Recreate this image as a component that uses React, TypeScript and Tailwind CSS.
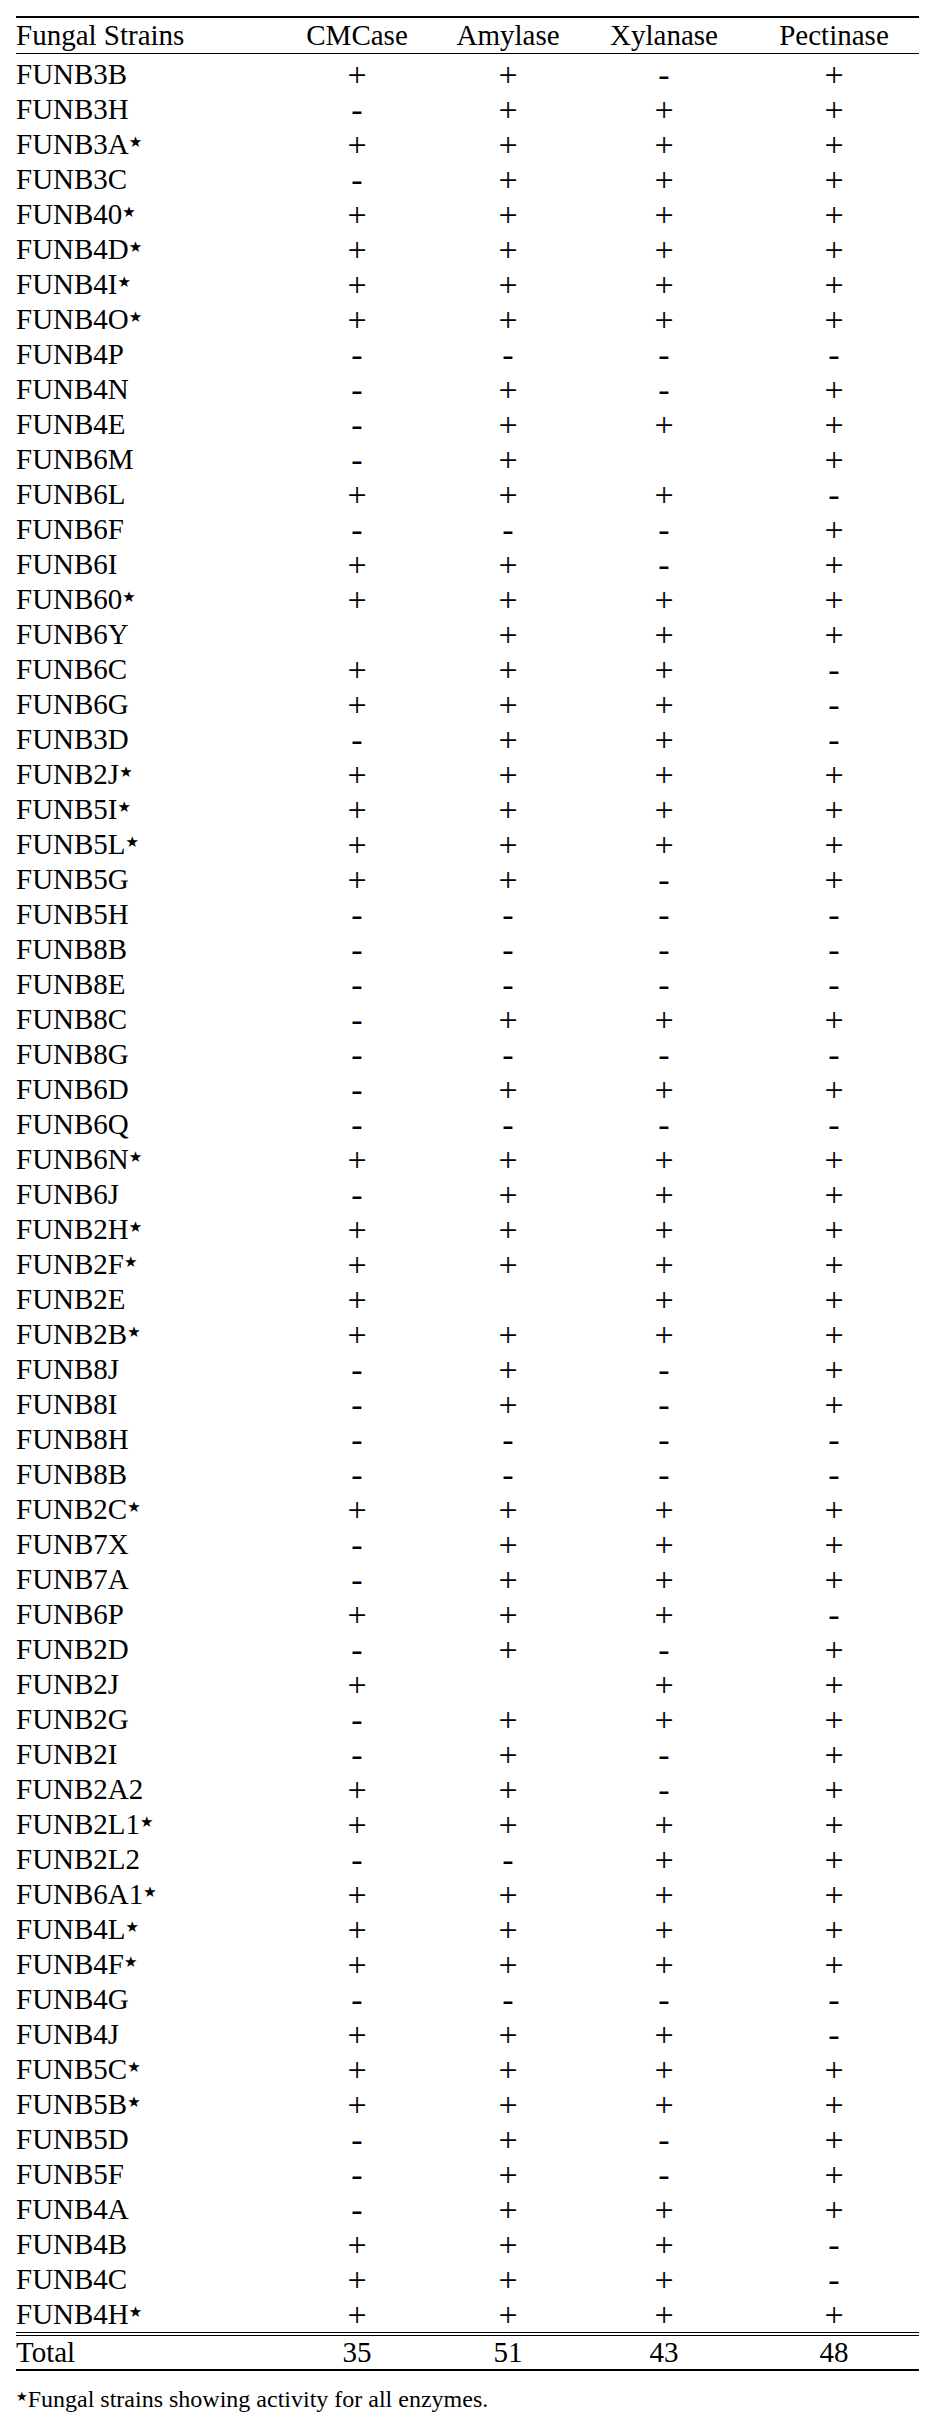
import React from "react";

type Row = [string, boolean, string, string, string, string];

const rows: Row[] = [
  ["FUNB3B", false, "+", "+", "-", "+"],
  ["FUNB3H", false, "-", "+", "+", "+"],
  ["FUNB3A", true, "+", "+", "+", "+"],
  ["FUNB3C", false, "-", "+", "+", "+"],
  ["FUNB40", true, "+", "+", "+", "+"],
  ["FUNB4D", true, "+", "+", "+", "+"],
  ["FUNB4I", true, "+", "+", "+", "+"],
  ["FUNB4O", true, "+", "+", "+", "+"],
  ["FUNB4P", false, "-", "-", "-", "-"],
  ["FUNB4N", false, "-", "+", "-", "+"],
  ["FUNB4E", false, "-", "+", "+", "+"],
  ["FUNB6M", false, "-", "+", "", "+"],
  ["FUNB6L", false, "+", "+", "+", "-"],
  ["FUNB6F", false, "-", "-", "-", "+"],
  ["FUNB6I", false, "+", "+", "-", "+"],
  ["FUNB60", true, "+", "+", "+", "+"],
  ["FUNB6Y", false, "", "+", "+", "+"],
  ["FUNB6C", false, "+", "+", "+", "-"],
  ["FUNB6G", false, "+", "+", "+", "-"],
  ["FUNB3D", false, "-", "+", "+", "-"],
  ["FUNB2J", true, "+", "+", "+", "+"],
  ["FUNB5I", true, "+", "+", "+", "+"],
  ["FUNB5L", true, "+", "+", "+", "+"],
  ["FUNB5G", false, "+", "+", "-", "+"],
  ["FUNB5H", false, "-", "-", "-", "-"],
  ["FUNB8B", false, "-", "-", "-", "-"],
  ["FUNB8E", false, "-", "-", "-", "-"],
  ["FUNB8C", false, "-", "+", "+", "+"],
  ["FUNB8G", false, "-", "-", "-", "-"],
  ["FUNB6D", false, "-", "+", "+", "+"],
  ["FUNB6Q", false, "-", "-", "-", "-"],
  ["FUNB6N", true, "+", "+", "+", "+"],
  ["FUNB6J", false, "-", "+", "+", "+"],
  ["FUNB2H", true, "+", "+", "+", "+"],
  ["FUNB2F", true, "+", "+", "+", "+"],
  ["FUNB2E", false, "+", "", "+", "+"],
  ["FUNB2B", true, "+", "+", "+", "+"],
  ["FUNB8J", false, "-", "+", "-", "+"],
  ["FUNB8I", false, "-", "+", "-", "+"],
  ["FUNB8H", false, "-", "-", "-", "-"],
  ["FUNB8B", false, "-", "-", "-", "-"],
  ["FUNB2C", true, "+", "+", "+", "+"],
  ["FUNB7X", false, "-", "+", "+", "+"],
  ["FUNB7A", false, "-", "+", "+", "+"],
  ["FUNB6P", false, "+", "+", "+", "-"],
  ["FUNB2D", false, "-", "+", "-", "+"],
  ["FUNB2J", false, "+", "", "+", "+"],
  ["FUNB2G", false, "-", "+", "+", "+"],
  ["FUNB2I", false, "-", "+", "-", "+"],
  ["FUNB2A2", false, "+", "+", "-", "+"],
  ["FUNB2L1", true, "+", "+", "+", "+"],
  ["FUNB2L2", false, "-", "-", "+", "+"],
  ["FUNB6A1", true, "+", "+", "+", "+"],
  ["FUNB4L", true, "+", "+", "+", "+"],
  ["FUNB4F", true, "+", "+", "+", "+"],
  ["FUNB4G", false, "-", "-", "-", "-"],
  ["FUNB4J", false, "+", "+", "+", "-"],
  ["FUNB5C", true, "+", "+", "+", "+"],
  ["FUNB5B", true, "+", "+", "+", "+"],
  ["FUNB5D", false, "-", "+", "-", "+"],
  ["FUNB5F", false, "-", "+", "-", "+"],
  ["FUNB4A", false, "-", "+", "+", "+"],
  ["FUNB4B", false, "+", "+", "+", "-"],
  ["FUNB4C", false, "+", "+", "+", "-"],
  ["FUNB4H", true, "+", "+", "+", "+"],
];

const grid = "grid grid-cols-[263px_156px_146px_166px_174px] items-center";

function Star() {
  return <span className="text-[15px] align-[7px] font-['DejaVu_Sans',sans-serif]">★</span>;
}

function Sign({ v }: { v: string }) {
  return <div className="text-center text-[34px] leading-none">{v}</div>;
}

export default function App() {
  return (
    <div className="w-[934px] h-[2424px] bg-white text-black font-['Liberation_Serif',serif] pt-[16px] pl-[16px]">
      <div className="w-[903px]">
        <div className="border-t-2 border-black" />
        <div className={`${grid} h-[35px] text-[29px] leading-none`}>
          <div>Fungal Strains</div>
          <div className="text-center">CMCase</div>
          <div className="text-center">Amylase</div>
          <div className="text-center">Xylanase</div>
          <div className="text-center">Pectinase</div>
        </div>
        <div className="border-t border-black" />
        <div className="pt-[3px]">
          {rows.map((r, i) => (
            <div key={i} className={`${grid} h-[35px] text-[29px] leading-none`}>
              <div className="whitespace-nowrap">
                {r[0]}
                {r[1] && <Star />}
              </div>
              <Sign v={r[2]} />
              <Sign v={r[3]} />
              <Sign v={r[4]} />
              <Sign v={r[5]} />
            </div>
          ))}
        </div>
        <div className="border-t-[4px] border-double border-black" />
        <div className={`${grid} h-[33px] text-[29px] leading-none`}>
          <div>Total</div>
          <div className="text-center">35</div>
          <div className="text-center">51</div>
          <div className="text-center">43</div>
          <div className="text-center">48</div>
        </div>
        <div className="border-t-2 border-black" />
        <div className="mt-[14px] text-[24px] leading-[24px]">
          <span className="text-[13px] align-[6px] font-['DejaVu_Sans',sans-serif]">★</span>
          Fungal strains showing activity for all enzymes.
        </div>
      </div>
    </div>
  );
}
